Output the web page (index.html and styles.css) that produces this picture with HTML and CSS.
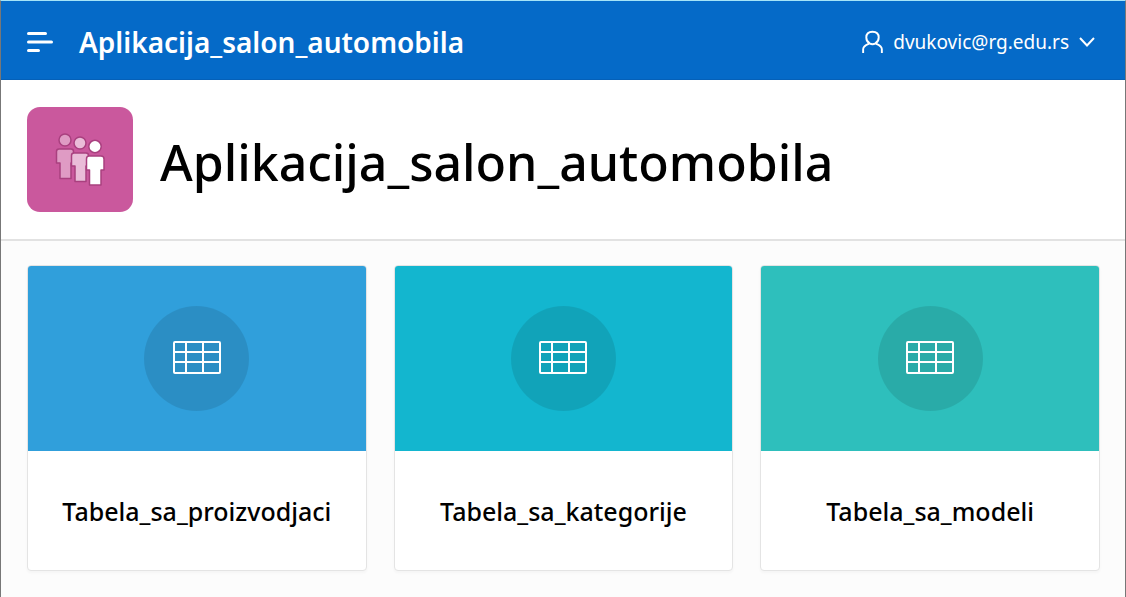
FILE: index.html
```html
<!DOCTYPE html>
<html lang="sr">
<head>
<meta charset="utf-8">
<meta name="viewport" content="width=device-width, initial-scale=1">
<title>Aplikacija_salon_automobila</title>
<link rel="stylesheet" href="styles.css">
</head>
<body>
<svg class="sprite" aria-hidden="true">
  <symbol id="icon-table" viewBox="0 0 48 34">
    <path d="M2 1H46Q47 1 47 2V31Q47 32 46 32H2Q1 32 1 31V2Q1 1 2 1ZM1 11H47M1 21H47M13 1V32M30 1V32" fill="none" stroke="#fff" stroke-width="2"/>
  </symbol>
</svg>
<header class="topbar">
  <button class="menu" type="button" aria-label="Menu">
    <svg width="26" height="20" viewBox="0 0 26 20" fill="none" stroke="#fff" stroke-width="3" stroke-linecap="round"><path d="M1.500 1.500H18.500M1.500 10H24.500M1.500 18.500H11.500"/></svg>
  </button>
  <a class="brand" href="#">Aplikacija_salon_automobila</a>
  <button class="user" type="button">
    <svg width="21" height="24" viewBox="0 0 22 24" fill="none" stroke="#fff" stroke-width="2"><path d="M8 13.500C5.500 12 4.500 9.500 4.500 7.300C4.500 3.500 7 1.200 11 1.200S17.500 3.500 17.500 7.300C17.500 9.500 16.500 12 14 13.500Q11 15.200 8 13.500C4.500 15 1.200 16 1.200 19.500V23.500M14 13.500C17.500 15 20.800 16 20.800 19.500V23.500"/></svg>
    <span>dvukovic@rg.edu.rs</span>
    <svg width="16" height="10" viewBox="0 0 16 10" fill="none" stroke="#fff" stroke-width="2"><path d="M1 1L8 8.500L15 1"/></svg>
  </button>
</header>
<main class="content">
  <section class="hero">
    <svg class="app-icon" viewBox="0 0 106 105" aria-hidden="true">
      <rect width="106" height="105" rx="13" fill="#ca589d"/>
      <g stroke="#a9407f" stroke-width="1.500" stroke-linejoin="round">
        <g fill="#df9bc4"><circle cx="38" cy="33" r="6"/><path d="M32 42H44Q46.500 42 46.500 44.500V56H44V71.500H33V56H29.500V44.500Q29.500 42 32 42Z"/></g>
        <g fill="#eabcd8"><circle cx="53" cy="36" r="6"/><path d="M47 46H59Q61.500 46 61.500 48.500V59H59V74.500H48V59H44.500V48.500Q44.500 46 47 46Z"/></g>
        <g fill="#fff"><circle cx="68" cy="39.500" r="6.200"/><path d="M62 49H74Q77 49 77 52V63H74V78H62.500V63H59.500V52Q59.500 49 62 49Z"/></g>
      </g>
    </svg>
    <h1 class="title">Aplikacija_salon_automobila</h1>
  </section>
  <nav class="cards">
    <a class="card" href="#"><span class="banner blue"><span class="disc"><svg class="grid-icon"><use href="#icon-table"/></svg></span></span><span class="label">Tabela_sa_proizvodjaci</span></a>
    <a class="card" href="#"><span class="banner cyan"><span class="disc"><svg class="grid-icon"><use href="#icon-table"/></svg></span></span><span class="label">Tabela_sa_kategorije</span></a>
    <a class="card" href="#"><span class="banner teal"><span class="disc"><svg class="grid-icon"><use href="#icon-table"/></svg></span></span><span class="label">Tabela_sa_modeli</span></a>
  </nav>
</main>
</body>
</html>
```
FILE: styles.css
```css
* {
  box-sizing: border-box;
}

body {
  margin: 0;
  min-height: 100vh;
  border: 1px solid #777;
  border-top-color: #a5e4f8;
  border-bottom: 0;
  background: #fcfcfc;
  color: #000;
  font-family: "Noto Sans", "Open Sans", sans-serif;
}

.sprite {
  display: none;
}

.topbar {
  display: flex;
  align-items: center;
  height: 79px;
  padding: 3px 30px 0 26px;
  border-bottom: 1px solid #0560b8;
  background: #056ac8;
  color: #fff;
}

button {
  display: flex;
  align-items: center;
  padding: 0;
  border: 0;
  background: none;
  color: inherit;
  font: inherit;
}

.brand {
  margin-left: 26px;
  color: inherit;
  font-size: 28px;
  font-weight: 600;
  text-decoration: none;
}

.user {
  gap: 10px;
  margin-left: auto;
  font-size: 19px;
}

.hero {
  display: flex;
  align-items: center;
  gap: 27px;
  padding: 27px 26px;
  border-bottom: 2px solid #e2e2e2;
  background: #fff;
}

.app-icon {
  width: 106px;
  height: 105px;
}

.title {
  margin: 0;
  padding-top: 4px;
  font-size: 50px;
  font-weight: 500;
  line-height: 64px;
}

.cards {
  display: grid;
  grid-template-columns: repeat(3, 1fr);
  gap: 27px;
  padding: 24px 25px 24px 26px;
}

.card {
  overflow: hidden;
  border: 1px solid #e4e4e4;
  border-radius: 4px;
  background: #fff;
  box-shadow: 0 2px 3px rgba(0, 0, 0, 0.03);
  color: inherit;
  text-decoration: none;
}

.banner {
  display: grid;
  place-items: center;
  height: 185px;
}

.blue {
  background: #309fdb;
}

.cyan {
  background: #13b6cf;
}

.teal {
  background: #2ebfbc;
}

.disc {
  display: grid;
  place-items: center;
  width: 105px;
  height: 105px;
  padding-bottom: 2px;
  border-radius: 50%;
  background: rgba(0, 0, 0, 0.1);
}

.grid-icon {
  width: 48px;
  height: 34px;
}

.label {
  display: grid;
  place-items: center;
  height: 119px;
  font-size: 25px;
  font-weight: 500;
}
```
